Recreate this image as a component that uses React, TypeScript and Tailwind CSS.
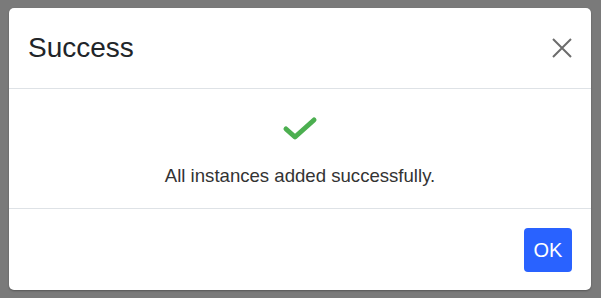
export default function App() {
  return (
    <div className="h-[298px] w-[601px] bg-[#7a7a7a] pt-[8px] pl-[9px]" style={{ fontFamily: '"Liberation Sans", Arial, sans-serif' }}>
      <div className="flex h-[282px] w-[582px] flex-col rounded-[5px] bg-white shadow-[0_1px_2px_rgba(0,0,0,0.3)]">
        <div className="flex h-[81px] items-center justify-between border-b border-[#dee2e6] pl-[19px] pr-[19px]">
          <h2 className="text-[28px] leading-none text-[#212529]">Success</h2>
          <button className="flex h-[20px] w-[20px] items-center justify-center text-[#6c6c6c]">
            <svg width="20" height="20" viewBox="0 0 20 20" fill="none" stroke="currentColor" strokeWidth="2">
              <path d="M1 1L19 19M19 1L1 19" />
            </svg>
          </button>
        </div>
        <div className="flex h-[120px] flex-col items-center border-b border-[#dee2e6] pt-[27px]">
          <svg width="36" height="26" viewBox="0 0 36 26" fill="none" stroke="#4caf50" strokeWidth="5" strokeLinecap="round" strokeLinejoin="round">
            <path d="M4 13L13 21L32 4" />
          </svg>
          <p className="mt-[23px] text-[18.6px] leading-[22px] text-[#333]">All instances added successfully.</p>
        </div>
        <div className="flex flex-1 items-center justify-end pr-[19px]">
          <button className="h-[44px] w-[48px] rounded-[4px] bg-[#2962ff] text-[20px] text-white">OK</button>
        </div>
      </div>
    </div>
  );
}
